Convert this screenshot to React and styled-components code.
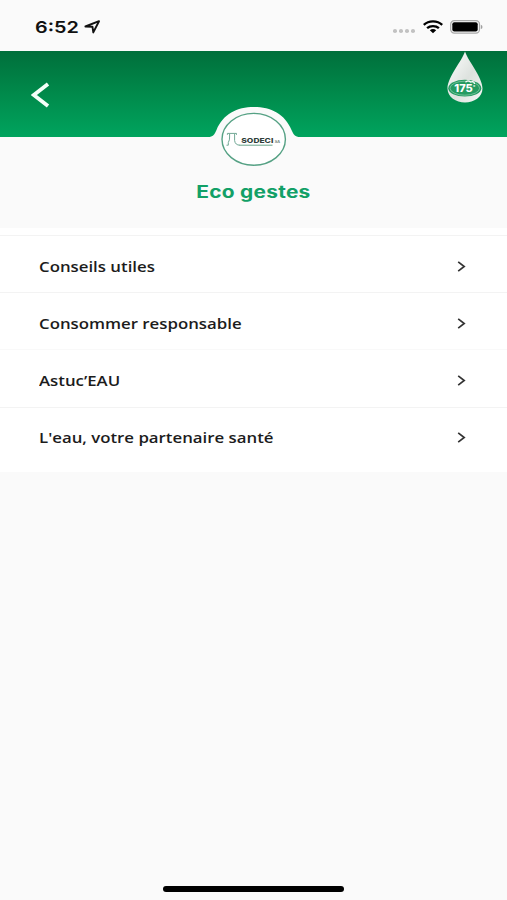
import React from 'react';
import styled, { createGlobalStyle } from 'styled-components';

const GlobalStyle = createGlobalStyle`
  * {
    box-sizing: border-box;
  }

  body {
    margin: 0;
    background: #fafafa;
  }
`;

const Screen = styled.div`
  display: flex;
  flex-direction: column;
  width: 507px;
  height: 900px;
  overflow: hidden;
  background: #fafafa;
  color: #1c1c1c;
  font-family: 'Open Sans', sans-serif;
`;

const StatusBar = styled.div`
  display: flex;
  flex: none;
  align-items: center;
  justify-content: space-between;
  height: 51px;
  padding: 3px 24px 0 35px;
`;

const StatusGroup = styled.div`
  display: flex;
  align-items: center;
  gap: ${props => props.$gap}px;
`;

const Wide = styled.span`
  display: block;
  white-space: nowrap;
  transform: scaleX(${props => props.$stretch});
  transform-origin: ${props => props.$origin || 'left'} center;
`;

const Time = styled.div`
  width: 44px;
  font: 600 16.5px/20px Inter, sans-serif;
  color: #111111;
`;

const Dots = styled.div`
  display: flex;
  gap: 2.2px;
  padding-top: 8px;
  margin-right: 1px;
`;

const Dot = styled.span`
  width: 3.8px;
  height: 3.4px;
  border-radius: 50%;
  background: #c2c2c2;
`;

const Header = styled.header`
  position: relative;
  display: flex;
  flex: none;
  justify-content: space-between;
  height: 86px;
  padding: 0 23px 0 31px;
  background: linear-gradient(#006f3b, #008a4b 50%, #00a45e);
`;

const BackButton = styled.button`
  display: flex;
  align-items: center;
  padding: 2px 0 0;
  border: 0;
  background: none;
`;

const Emblem = styled.svg`
  position: absolute;
  top: 55px;
  left: 205px;
`;

const TitleBar = styled.div`
  display: flex;
  flex: none;
  justify-content: center;
  height: 91px;
  padding-top: 43px;
`;

const Title = styled.h1`
  margin: 0;
  font: 700 17px/24px Inter, sans-serif;
  letter-spacing: 0.2px;
  color: #12a067;
`;

const List = styled.ul`
  flex: none;
  height: 244px;
  margin: 0;
  padding: 7px 0 0;
  list-style: none;
  background: #ffffff;
`;

const Row = styled.li`
  display: flex;
  align-items: center;
  justify-content: space-between;
  height: 57.2px;
  padding: 5px 41px 0 38.5px;
  border-top: 1px solid ${props => (props.$faint ? '#f9f9f9' : '#f3f3f3')};
  font-size: 14px;
  font-weight: 600;
  line-height: 20px;
`;

const HomeIndicator = styled.div`
  flex: none;
  width: 181px;
  height: 6px;
  margin: auto auto 8px 163px;
  border-radius: 3px;
  background: #000000;
`;

const items = [
  { label: 'Conseils utiles' },
  { label: 'Consommer responsable' },
  { label: 'Astuc’EAU', faint: true },
  { label: "L'eau, votre partenaire santé" },
];

const LocationIcon = () => (
  <svg width="17" height="14" viewBox="0 0 17 14">
    <path
      d="M1.4 6.5 15 1.2 9.3 12.4 8.5 6.8Z"
      fill="none"
      stroke="#111111"
      strokeWidth="1.9"
      strokeLinejoin="round"
    />
  </svg>
);

const WifiIcon = () => (
  <svg width="20" height="14" viewBox="0 0 20 14">
    <g fill="none" stroke="#000000" strokeWidth="2.3">
      <path d="M.8 4.9C5.7.2 14.3.2 19.2 4.9" />
      <path d="M4.1 8.2C7.2 5.3 12.8 5.3 15.9 8.2" />
    </g>
    <path d="M6.8 10.3Q10 7.9 13.2 10.3L10 13.3Z" />
  </svg>
);

const BatteryIcon = () => (
  <svg width="33" height="14" viewBox="0 0 33 14">
    <rect x=".7" y=".7" width="28.8" height="12.4" rx="3.6" fill="#fafafa" stroke="#a9a9a9" strokeWidth="1.2" />
    <rect x="2.3" y="2.2" width="25.4" height="9.4" rx="2" />
    <path d="M30.8 4.8Q32.5 5.2 32.5 6.9T30.8 9Z" fill="#a0a0a0" />
  </svg>
);

const DropLogo = () => (
  <svg width="38" height="53" viewBox="0 0 38 53">
    <defs>
      <linearGradient id="drop" x1="0" y1="0" x2="1" y2="1">
        <stop offset="0" stopColor="#ffffff" />
        <stop offset=".55" stopColor="#dde2de" />
        <stop offset="1" stopColor="#f4f7f5" />
      </linearGradient>
    </defs>
    <path d="M19 .5C22 10 36.5 26 36.5 37.5C36.5 46 28 51.5 19 51.5S1.5 46 1.5 37.5C1.5 26 16 10 19 .5Z" fill="url(#drop)" />
    <ellipse cx="18.8" cy="37.2" rx="16.5" ry="8.4" fill="#249b61" />
    <ellipse cx="18.8" cy="37.2" rx="14.8" ry="7" fill="none" stroke="#8fcdac" strokeWidth=".7" />
    <path d="M19.5 31.3Q22 28.5 24.5 31Q28 29.5 28.5 33" fill="none" stroke="#ffffff" strokeWidth="1.3" />
    <text x="8.3" y="41.2" textLength="18.5" lengthAdjust="spacingAndGlyphs" fill="#ffffff" fontFamily="Inter, sans-serif" fontSize="10" fontWeight="800">
      175
    </text>
    <text x="27" y="37.5" fill="#ffffff" fontFamily="Inter, sans-serif" fontSize="5">
      °
    </text>
  </svg>
);

const SodeciEmblem = () => (
  <Emblem width="98" height="64" viewBox="0 0 98 64">
    <path d="M3 31.2C8 31 9.5 28.5 11.5 24C18 8 32 1 49 1S80 8 86.5 24C88.5 28.5 90 31 95 31.2V64H3Z" fill="#fafafa" />
    <ellipse cx="48.7" cy="33.3" rx="31.7" ry="25.9" fill="#ffffff" stroke="#55a184" strokeWidth="1.4" />
    <path
      d="M22.4 28.8V27.4H31.5V28.8M24.6 28V31Q24.8 34 23.3 36.5V39.2H21.5M29.6 28V34.5Q30.2 39.2 35 39.2"
      fill="none"
      stroke="#70a794"
      strokeWidth="1"
    />
    <text x="36.3" y="36.9" textLength="32" lengthAdjust="spacingAndGlyphs" fill="#30403a" fontFamily="Inter, sans-serif" fontSize="6.5" fontWeight="800">
      SODECI
    </text>
    <path d="M34.5 39.2H67.5" stroke="#69a48a" strokeWidth="1" />
    <text x="69.8" y="37.2" textLength="5.3" lengthAdjust="spacingAndGlyphs" fill="#536a60" fontFamily="Inter, sans-serif" fontSize="3.2" fontWeight="600">
      SA
    </text>
  </Emblem>
);

const App = () => (
  <>
    <GlobalStyle />
    <Screen>
      <StatusBar>
        <StatusGroup $gap={5}>
          <Time>
            <Wide $stretch={1.2}>6:52</Wide>
          </Time>
          <LocationIcon />
        </StatusGroup>
        <StatusGroup $gap={7}>
          <Dots>
            <Dot />
            <Dot />
            <Dot />
            <Dot />
          </Dots>
          <WifiIcon />
          <BatteryIcon />
        </StatusGroup>
      </StatusBar>
      <Header>
        <BackButton aria-label="Retour">
          <svg width="19" height="26" viewBox="0 0 19 26">
            <path d="M17 2 2.8 13 17 24" fill="none" stroke="#f3fff8" strokeWidth="3.8" />
          </svg>
        </BackButton>
        <SodeciEmblem />
        <DropLogo />
      </Header>
      <TitleBar>
        <Title>
          <Wide $stretch={1.23} $origin="center">Eco gestes</Wide>
        </Title>
      </TitleBar>
      <List>
        {items.map(item => (
          <Row key={item.label} $faint={item.faint}>
            <Wide $stretch={1.2}>{item.label}</Wide>
            <svg width="9" height="12" viewBox="0 0 9 12">
              <path d="M1.2 .9 7.2 5.5 1.2 10.1" fill="none" stroke="#333333" strokeWidth="1.7" />
            </svg>
          </Row>
        ))}
      </List>
      <HomeIndicator />
    </Screen>
  </>
);

export default App;
